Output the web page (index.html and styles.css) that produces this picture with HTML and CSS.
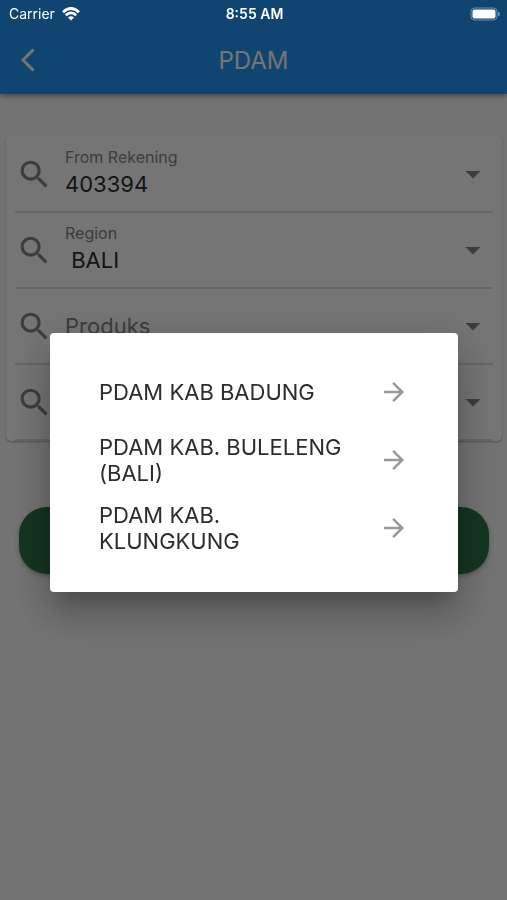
FILE: index.html
```html
<!DOCTYPE html>
<html lang="id">
<head>
    <meta charset="UTF-8">
    <meta name="viewport" content="width=device-width, initial-scale=1.0">
    <title>PDAM</title>
    <link rel="stylesheet" href="styles.css">
</head>
<body>
    <!-- shared icons -->
    <svg class="sprite" aria-hidden="true">
        <symbol id="icon-search" viewBox="0 0 24 24">
            <path d="M15.5 14h-.79l-.28-.27A6.47 6.47 0 0 0 16 9.5 6.5 6.5 0 1 0 9.5 16c1.61 0 3.09-.59 4.23-1.57l.27.28v.79l5 4.99L20.49 19l-4.99-5zm-6 0a4.5 4.5 0 1 1 0-9 4.5 4.5 0 0 1 0 9z"/>
        </symbol>
        <symbol id="icon-drop" viewBox="0 0 24 24">
            <path d="M7 10l5 5 5-5z"/>
        </symbol>
        <symbol id="icon-arrow" viewBox="0 0 24 24">
            <path d="M12 4l-1.41 1.41L16.17 11H4v2h12.17l-5.58 5.59L12 20l8-8z"/>
        </symbol>
    </svg>

    <div class="status-bar">
        <span class="carrier">Carrier
            <svg class="wifi" viewBox="0 0 18 14">
                <path d="M1 5.200Q9-2.200 17 5.200" />
                <path d="M3.800 8.200Q9 3.600 14.200 8.200" />
                <path class="wifi-dot" d="M9 13.500L6 10.500Q9 8 12 10.500z" />
            </svg>
        </span>
        <span class="clock">8:55 AM</span>
        <span class="power">
            <svg class="battery" viewBox="0 0 30 14">
                <rect class="battery-case" x="1" y="1" width="26" height="12" rx="3.500"/>
                <rect x="2.500" y="2.500" width="23" height="9" rx="2"/>
                <path class="battery-tip" d="M28 4.500q2 .8 2 2.500t-2 2.500z"/>
            </svg>
        </span>
    </div>

    <header class="app-bar">
        <button class="back" type="button" aria-label="Back">
            <svg viewBox="0 0 14 24"><path d="M12.500 1.500L2 12l10.500 10.500"/></svg>
        </button>
        <h1>PDAM</h1>
    </header>

    <main>
        <form class="card">
            <div class="field">
                <svg class="icon"><use href="#icon-search"/></svg>
                <div class="field-body">
                    <label for="rekening">From Rekening</label>
                    <select id="rekening"><option>403394</option></select>
                </div>
                <svg class="icon drop"><use href="#icon-drop"/></svg>
            </div>
            <div class="field">
                <svg class="icon"><use href="#icon-search"/></svg>
                <div class="field-body">
                    <label for="region">Region</label>
                    <select id="region"><option>&nbsp;BALI</option></select>
                </div>
                <svg class="icon drop"><use href="#icon-drop"/></svg>
            </div>
            <div class="field">
                <svg class="icon"><use href="#icon-search"/></svg>
                <div class="field-body">
                    <select class="empty" aria-label="Produks"><option>Produks</option></select>
                </div>
                <svg class="icon drop"><use href="#icon-drop"/></svg>
            </div>
            <div class="field">
                <svg class="icon"><use href="#icon-search"/></svg>
                <div class="field-body">
                    <select class="empty" aria-label="PDAM"><option></option></select>
                </div>
                <svg class="icon drop"><use href="#icon-drop"/></svg>
            </div>
        </form>
        <button class="submit" type="button" aria-label="Submit"></button>
    </main>

    <div class="overlay">
        <div class="dialog" role="dialog" aria-label="Produks">
            <button class="option" type="button">
                <span>PDAM KAB BADUNG</span>
                <svg><use href="#icon-arrow"/></svg>
            </button>
            <button class="option" type="button">
                <span>PDAM KAB. BULELENG (BALI)</span>
                <svg><use href="#icon-arrow"/></svg>
            </button>
            <button class="option" type="button">
                <span>PDAM KAB. KLUNGKUNG</span>
                <svg><use href="#icon-arrow"/></svg>
            </button>
        </div>
    </div>
</body>
</html>
```

FILE: styles.css
```css
* {
    box-sizing: border-box;
}

body {
    margin: 0;
    min-height: 100vh;
    background-color: #fafafa;
    font-family: Inter, "Liberation Sans", sans-serif;
    color: #2c2c2c;
}

button,
select {
    font-family: inherit;
    border: none;
    background: none;
    padding: 0;
    margin: 0;
}

.sprite {
    display: none;
}

/* status bar stays above the dimmed page */
.status-bar {
    position: fixed;
    top: 0;
    left: 0;
    right: 0;
    z-index: 20;
    display: grid;
    grid-template-columns: 1fr auto 1fr;
    align-items: center;
    height: 27px;
    padding: 0 7px 0 9px;
    color: white;
    font-size: 14px;
}

.carrier {
    display: flex;
    align-items: center;
    gap: 7px;
}

.wifi {
    width: 18px;
    height: 14px;
    fill: none;
    stroke: white;
    stroke-width: 2.8;
}

.wifi-dot {
    fill: white;
    stroke: none;
}

.clock {
    font-weight: 600;
}

.power {
    display: flex;
    justify-content: flex-end;
}

.battery {
    width: 30px;
    height: 14px;
    fill: white;
}

.battery-case {
    fill: none;
    stroke: white;
    stroke-opacity: 0.4;
}

.battery-tip {
    fill-opacity: 0.4;
}

.app-bar {
    display: grid;
    grid-template-columns: 56px 1fr 56px;
    align-items: center;
    height: 94px;
    padding-top: 26px;
    background-color: #2196f3;
    box-shadow: 0 2px 5px rgba(0, 0, 0, 0.4);
    color: white;
}

.app-bar h1 {
    margin: 0;
    text-align: center;
    font-size: 24px;
    font-weight: 400;
}

.back {
    display: flex;
    justify-content: center;
    align-items: center;
    height: 56px;
}

.back svg {
    width: 14px;
    height: 24px;
    fill: none;
    stroke: white;
    stroke-width: 3;
}

main {
    padding: 42px 5px 0 6px;
}

.card {
    padding: 1px 9px 0;
    border-radius: 5px;
    background-color: white;
    box-shadow: 0 1px 2px rgba(0, 0, 0, 0.3);
}

.field {
    display: flex;
    align-items: center;
    height: 76px;
    border-bottom: 2px solid #dedede;
}

.icon {
    flex: none;
    width: 37px;
    height: 37px;
    margin-left: 1px;
    fill: #858585;
}

.icon.drop {
    width: 36px;
    height: 36px;
    margin-right: 2px;
}

.field-body {
    flex: 1;
    display: flex;
    flex-direction: column;
    padding-left: 12px;
}

.field label {
    font-size: 16px;
    line-height: 20px;
    color: #858585;
}

.field select {
    appearance: none;
    width: 100%;
    height: 34px;
    font-size: 22px;
    color: #2c2c2c;
    opacity: 1;
}

.field select.empty {
    color: #858585;
}

.submit {
    display: block;
    width: calc(100% - 26px);
    height: 67px;
    margin: 66px 13px 0;
    border-radius: 28px;
    background-color: #2a7546;
    box-shadow: 0 2px 4px rgba(0, 0, 0, 0.3);
}

.overlay {
    position: fixed;
    inset: 0;
    z-index: 10;
    display: flex;
    align-items: center;
    justify-content: center;
    padding: 24px 49px 0 50px;
    background-color: rgba(0, 0, 0, 0.54);
}

.dialog {
    width: 100%;
    padding: 25px 49px 30px;
    border-radius: 4px;
    background-color: white;
    box-shadow: 0 14px 20px -8px rgba(0, 0, 0, 0.2), 0 24px 38px 4px rgba(0, 0, 0, 0.14), 0 10px 46px 8px rgba(0, 0, 0, 0.12);
}

.option {
    display: flex;
    align-items: center;
    justify-content: space-between;
    gap: 24px;
    width: 100%;
    min-height: 68px;
    font-size: 22px;
    line-height: 26px;
    text-align: left;
    color: #2c2c2c;
}

.option svg {
    flex: none;
    width: 30px;
    height: 30px;
    fill: #999;
}
```
